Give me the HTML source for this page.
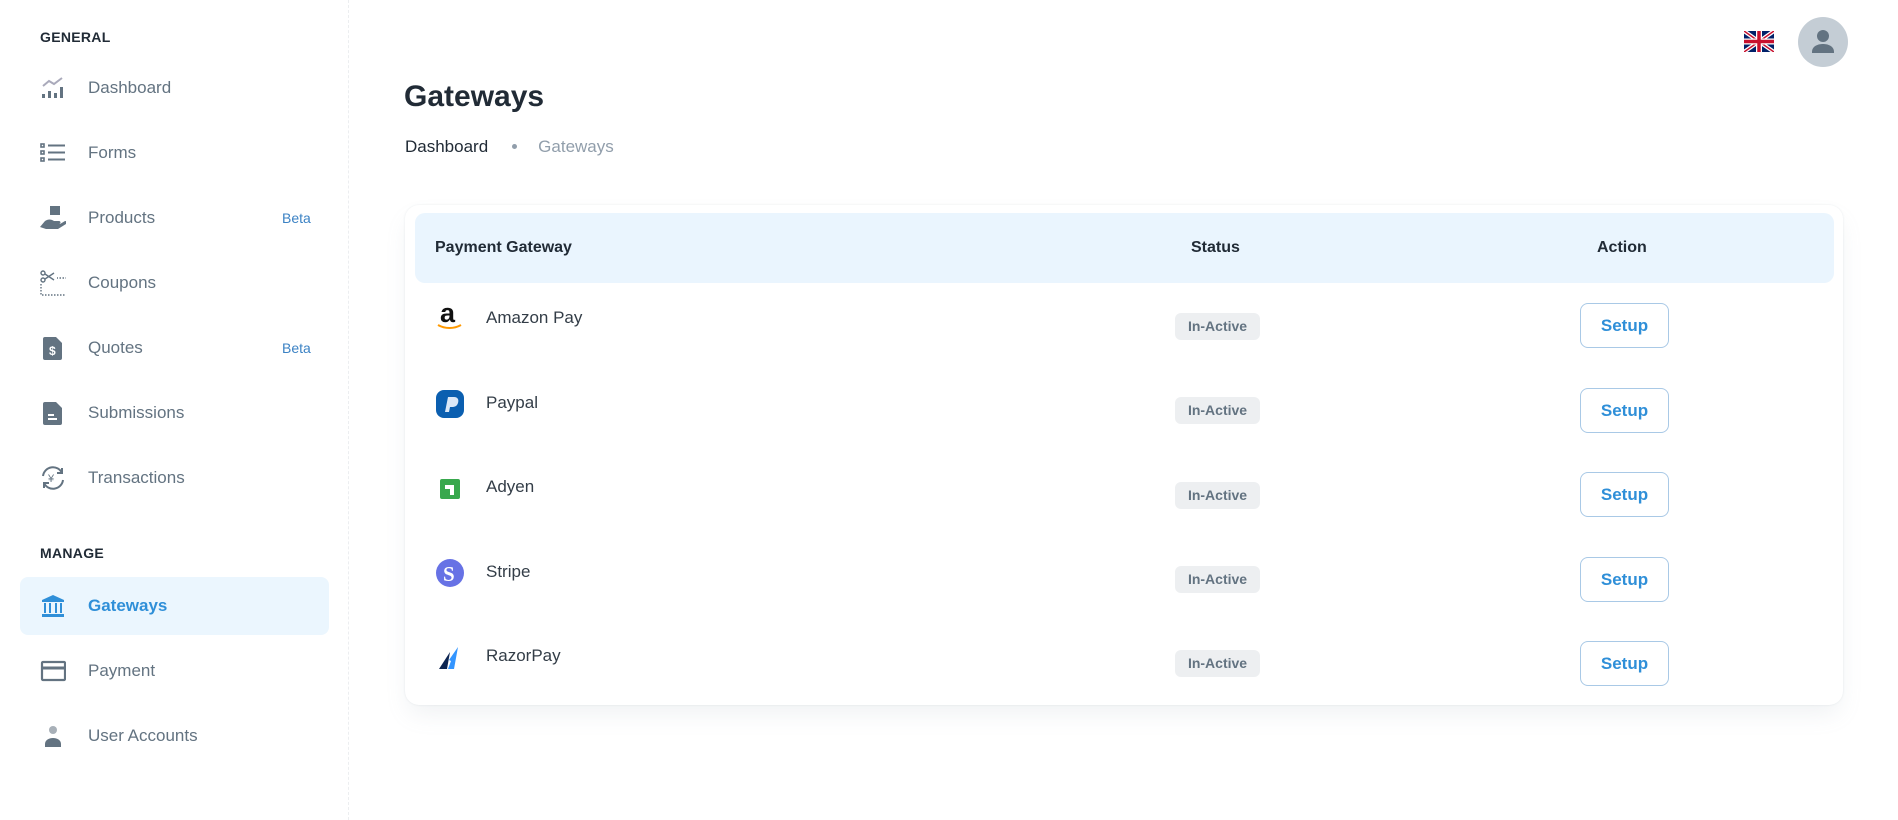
<!DOCTYPE html>
<html><head><meta charset="utf-8"><style>
*{margin:0;padding:0;box-sizing:border-box}
body{width:1898px;height:820px;background:#fff;font-family:"Liberation Sans",sans-serif;position:relative;overflow:hidden;color:#212b36}
.side{position:absolute;left:0;top:0;width:349px;height:820px;border-right:1px dashed #eceef0}
.sec{position:absolute;left:40px;font-size:14px;font-weight:bold;color:#212b36;letter-spacing:.3px}
.it{position:absolute;left:20px;width:309px;height:58px;display:flex;align-items:center;padding-left:20px;font-size:17px;color:#637381}
.it svg{width:26px;height:26px;margin-right:22px;flex:none}
.it .b{position:absolute;left:262px;font-size:14px;color:#3b82c4}
.act{background:#ebf6fe;border-radius:8px;color:#2f8fd8;font-weight:bold}
h1{position:absolute;left:404px;top:80px;font-size:30px;font-weight:bold;color:#212b36}
.bc{position:absolute;left:405px;top:137px;font-size:17px;color:#212b36}
.card{position:absolute;left:405px;top:205px;width:1438px;height:500px;border-radius:14px;box-shadow:0 0 2px rgba(145,158,171,.2),0 12px 24px -4px rgba(145,158,171,.14)}
.hd{position:absolute;left:415px;top:213px;width:1419px;height:70px;background:#eaf5fe;border-radius:10px}
.ht{position:absolute;top:239px;font-size:16px;font-weight:bold;color:#212b36}
.nm{position:absolute;left:486px;font-size:17px;color:#333d47}
.ic{position:absolute;left:436px;width:28px;height:28px}
.bd{position:absolute;left:1175px;width:85px;height:27px;background:#edeff1;border-radius:6px;font-size:14px;font-weight:bold;color:#637381;text-align:center;line-height:27px}
.st{position:absolute;left:1580px;width:89px;height:45px;border:1px solid #a9c9e6;border-radius:8px;font-size:17px;font-weight:bold;color:#2f8fd8;text-align:center;line-height:43px}
</style></head><body>
<div class="side">
<div class="sec" style="top:29px">GENERAL</div>
<div class="it" style="top:59px"><svg viewBox="0 0 26 26"><path d="M3 11l6-5 5 3 8-6" stroke="#aab" stroke-width="2" fill="none"/><rect x="2" y="19" width="3" height="4" fill="#637381"/><rect x="8" y="16" width="3" height="7" fill="#637381"/><rect x="14" y="18" width="3" height="5" fill="#637381"/><rect x="20" y="12" width="3" height="11" fill="#637381"/></svg>Dashboard</div>
<div class="it" style="top:124px"><svg viewBox="0 0 26 26" fill="none" stroke="#637381" stroke-width="1.6"><rect x="1" y="4" width="3" height="3"/><rect x="1" y="11" width="3" height="3"/><rect x="1" y="18" width="3" height="3"/><path d="M8 5.5h17M8 12.5h17M8 19.5h17" stroke-width="2"/></svg>Forms</div>
<div class="it" style="top:189px"><svg viewBox="0 0 26 26" fill="#637381"><rect x="10" y="1" width="10" height="9"/><path d="M0 22l5-6c3-2 6-2 9 0h5c2 0 2 3 0 3h-6 7l5-3c2 0 3 2 1 3l-8 5H6z"/></svg>Products<span class="b">Beta</span></div>
<div class="it" style="top:254px"><svg viewBox="0 0 26 26" fill="none" stroke="#637381" stroke-width="1.4"><circle cx="3" cy="3" r="2"/><circle cx="3" cy="10" r="2"/><path d="M5 4l9 6M5 9l9-6"/><path d="M1 14v11h26V8h-10" stroke-dasharray="1.5 1.5"/></svg>Coupons</div>
<div class="it" style="top:319px"><svg viewBox="0 0 26 26"><path d="M5 2h11l6 6v15a2 2 0 0 1-2 2H5a2 2 0 0 1-2-2V4a2 2 0 0 1 2-2z" fill="#637381"/><text x="9" y="20" font-size="12" font-weight="bold" fill="#fff" font-family="Liberation Sans">$</text></svg>Quotes<span class="b">Beta</span></div>
<div class="it" style="top:384px"><svg viewBox="0 0 26 26"><path d="M5 2h11l6 6v15a2 2 0 0 1-2 2H5a2 2 0 0 1-2-2V4a2 2 0 0 1 2-2z" fill="#637381"/><path d="M8 15h6M8 19h9" stroke="#fff" stroke-width="2"/></svg>Submissions</div>
<div class="it" style="top:449px"><svg viewBox="0 0 26 26" fill="none" stroke="#637381" stroke-width="2"><path d="M3 11a10 10 0 0 1 19-3M23 15a10 10 0 0 1-19 3"/><path d="M22 3v5h-5M4 23v-5h5"/><text x="8" y="17" font-size="11" fill="#637381" stroke="none" font-family="Liberation Sans">¥</text></svg>Transactions</div>
<div class="sec" style="top:545px">MANAGE</div>
<div class="it act" style="top:577px"><svg viewBox="0 0 26 26" fill="#2f8fd8"><path d="M2 7l11-5 11 5v2H2z"/><rect x="4" y="10" width="2" height="10"/><rect x="9" y="10" width="2" height="10"/><rect x="15" y="10" width="2" height="10"/><rect x="20" y="10" width="2" height="10"/><rect x="2" y="21" width="22" height="3"/></svg>Gateways</div>
<div class="it" style="top:642px"><svg viewBox="0 0 26 26" fill="none" stroke="#637381" stroke-width="2.2"><rect x="2" y="4" width="23" height="18" rx="1"/><path d="M2 10h23" stroke-width="3"/></svg>Payment</div>
<div class="it" style="top:707px"><svg viewBox="0 0 26 26"><circle cx="13" cy="7" r="4" fill="#a8b0b8"/><path d="M5 24v-3c0-4 4-6 8-6s8 2 8 6v3z" fill="#637381"/></svg>User Accounts</div>
</div>

<svg style="position:absolute;left:1744px;top:31px" width="30" height="21" viewBox="0 0 60 42"><rect width="60" height="42" fill="#012169"/><path d="M0 0l60 42M60 0L0 42" stroke="#fff" stroke-width="8"/><path d="M0 0l60 42M60 0L0 42" stroke="#c8102e" stroke-width="3"/><path d="M30 0v42M0 21h60" stroke="#fff" stroke-width="12"/><path d="M30 0v42M0 21h60" stroke="#c8102e" stroke-width="7"/></svg>
<div style="position:absolute;left:1798px;top:17px;width:50px;height:50px;border-radius:50%;background:#c4cdd5"><svg width="50" height="50" viewBox="0 0 50 50"><circle cx="25" cy="19" r="6" fill="#637381"/><path d="M14 35c0-6 6-8 11-8s11 2 11 8v1H14z" fill="#637381"/></svg></div>

<h1>Gateways</h1>
<div class="bc">Dashboard<span style="display:inline-block;width:5px;height:5px;border-radius:50%;background:#919eab;margin:0 21px 3px 24px"></span><span style="color:#919eab">Gateways</span></div>

<div class="card"></div>
<div class="hd"></div>
<div class="ht" style="left:435px">Payment Gateway</div>
<div class="ht" style="left:1191px">Status</div>
<div class="ht" style="left:1597px">Action</div>

<svg class="ic" style="top:302px" viewBox="0 0 28 28"><text x="4" y="20" font-size="27" font-weight="bold" font-family="Liberation Sans" fill="#111">a</text><path d="M2 23c7 4 16 4 23 0" stroke="#f90" stroke-width="2" fill="none"/></svg>
<div class="nm" style="top:308px">Amazon Pay</div>
<svg class="ic" style="top:390px" viewBox="0 0 28 28"><rect width="28" height="28" rx="8" fill="#0b5fb0"/><path d="M9 22l3-15h6c4 0 5 3 4 6s-3 4-6 4h-2l-1 5z" fill="#dbe8f7"/></svg>
<div class="nm" style="top:393px">Paypal</div>
<svg class="ic" style="top:475px" viewBox="0 0 28 28"><rect x="4" y="4" width="20" height="20" rx="2" fill="#38a84d"/><path d="M9 10h9v10h-4v-6H9z" fill="#fff"/></svg>
<div class="nm" style="top:477px">Adyen</div>
<svg class="ic" style="top:559px" viewBox="0 0 28 28"><circle cx="14" cy="14" r="14" fill="#6772e5"/><text x="7" y="22" font-size="21" font-weight="bold" font-family="Liberation Serif" fill="#fff">S</text></svg>
<div class="nm" style="top:562px">Stripe</div>
<svg class="ic" style="top:644px" viewBox="0 0 28 28"><path d="M14 8l-11 17h8z" fill="#0c2451"/><path d="M13 16l9-13-4 22h-6l3-8z" fill="#3395ff"/></svg>
<div class="nm" style="top:646px">RazorPay</div>

<div class="bd" style="top:313px">In-Active</div>
<div class="bd" style="top:397px">In-Active</div>
<div class="bd" style="top:482px">In-Active</div>
<div class="bd" style="top:566px">In-Active</div>
<div class="bd" style="top:650px">In-Active</div>
<div class="st" style="top:303px">Setup</div>
<div class="st" style="top:388px">Setup</div>
<div class="st" style="top:472px">Setup</div>
<div class="st" style="top:557px">Setup</div>
<div class="st" style="top:641px">Setup</div>
</body></html>
